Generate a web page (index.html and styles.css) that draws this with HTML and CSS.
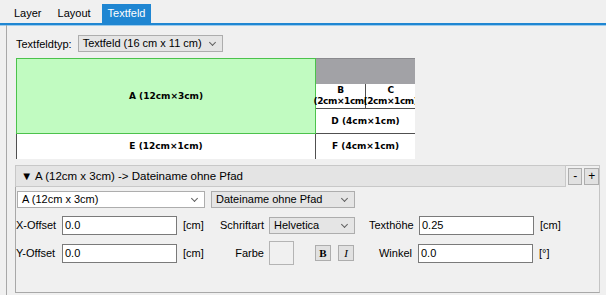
FILE: index.html
```html
<!DOCTYPE html>
<html lang="de">
<head>
    <meta charset="UTF-8">
    <title>Textfeld</title>
    <link rel="stylesheet" href="styles.css">
</head>
<body>
    <div class="tabs">
        <div class="tab">Layer</div>
        <div class="tab">Layout</div>
        <div class="tab active">Textfeld</div>
    </div>

    <div class="panel">
        <div class="type-row">
            <span class="label">Textfeldtyp:</span>
            <div class="combo type-combo">Textfeld (16 cm x 11 cm)<span class="arrow"></span></div>
        </div>

        <div class="diagram">
            <div class="cell cell-a">A (12cm×3cm)</div>
            <div class="cell cell-gray"></div>
            <div class="cell cell-b">B<br>(2cm×1cm)</div>
            <div class="cell cell-c">C<br>(2cm×1cm)</div>
            <div class="cell cell-d">D (4cm×1cm)</div>
            <div class="cell cell-e">E (12cm×1cm)</div>
            <div class="cell cell-f">F (4cm×1cm)</div>
        </div>

        <div class="group">
            <div class="group-head">
                <div class="section-title">▼ A (12cm x 3cm) -&gt; Dateiname ohne Pfad</div>
                <div class="small-btn">-</div>
                <div class="small-btn">+</div>
            </div>

            <div class="row row-combos">
                <div class="combo field-combo">A (12cm x 3cm)<span class="arrow"></span></div>
                <div class="combo name-combo">Dateiname ohne Pfad<span class="arrow"></span></div>
            </div>

            <div class="row">
                <span class="label offset-label">X-Offset</span>
                <div class="input">0.0</div>
                <span class="unit">[cm]</span>
                <span class="label mid-label">Schriftart</span>
                <div class="combo font-combo">Helvetica<span class="arrow"></span></div>
                <span class="label right-label">Texthöhe</span>
                <div class="input">0.25</div>
                <span class="unit">[cm]</span>
            </div>

            <div class="row">
                <span class="label offset-label">Y-Offset</span>
                <div class="input">0.0</div>
                <span class="unit">[cm]</span>
                <span class="label mid-label">Farbe</span>
                <div class="swatch"></div>
                <div class="style-btn bold">B</div>
                <div class="style-btn italic">I</div>
                <span class="label right-label">Winkel</span>
                <div class="input">0.0</div>
                <span class="unit">[°]</span>
            </div>
        </div>
    </div>
</body>
</html>
```

FILE: styles.css
```css
* {
    margin: 0;
    padding: 0;
    box-sizing: border-box;
}

body {
    font-family: 'Liberation Sans', Arial, sans-serif;
    font-size: 11px;
    color: #000000;
    background-color: #f0f0f0;
    width: 606px;
    height: 295px;
    overflow: hidden;
}

/* Reiter */
.tabs {
    display: flex;
    height: 25px;
    padding: 4px 0 0 8px;
    border-bottom: 2px solid #1f86d2;
    box-shadow: 0 1px 0 #9ccbec;
}

.tab {
    padding: 3px 6px 0 6px;
    margin-right: 4px;
    height: 19px;
}

.tab.active {
    background-color: #1f86d2;
    color: #ffffff;
    margin-left: 1px;
}

.panel {
    margin-left: 6px;
    border-left: 1px solid #a8a8a8;
    padding: 10px 0 0 9px;
    height: 270px;
}

.type-row {
    display: flex;
    align-items: center;
    gap: 6px;
}

.combo {
    position: relative;
    height: 17px;
    line-height: 15px;
    padding-left: 4px;
    background-color: #e5e5e5;
    border: 1px solid #adadad;
}

.arrow {
    position: absolute;
    right: 7px;
    top: 4px;
    width: 5px;
    height: 5px;
    border-right: 1px solid #606060;
    border-bottom: 1px solid #606060;
    transform: rotate(45deg);
}

.type-combo {
    width: 145px;
}

/* Skizze */
.diagram {
    display: grid;
    grid-template-columns: 300px 50px 49px;
    grid-template-rows: 26px 25px 25px 25px;
    width: 399px;
    margin-top: 6px;
    overflow: hidden;
    font-family: 'DejaVu Sans', Tahoma, sans-serif;
    font-size: 9px;
    font-weight: bold;
}

.cell {
    display: flex;
    align-items: center;
    justify-content: center;
    text-align: center;
    background-color: #ffffff;
    white-space: nowrap;
    line-height: 11px;
}

.cell-a {
    grid-row: 1 / 4;
    grid-column: 1;
    background-color: #c1fbc1;
    border: 1px solid #4cc24c;
}

.cell-gray {
    grid-row: 1;
    grid-column: 2 / 4;
    background-color: #a2a2a6;
    border-top: 1px solid #8a8a8e;
}

.cell-b {
    grid-row: 2;
    grid-column: 2;
    border-right: 1px solid #505050;
    border-bottom: 1px solid #505050;
    letter-spacing: -0.4px;
}

.cell-c {
    grid-row: 2;
    grid-column: 3;
    border-bottom: 1px solid #505050;
    letter-spacing: -0.4px;
}

.cell-d {
    grid-row: 3;
    grid-column: 2 / 4;
    border-bottom: 1px solid #505050;
}

.cell-e {
    grid-row: 4;
    grid-column: 1;
    border-left: 1px solid #505050;
    border-right: 1px solid #505050;
}

.cell-f {
    grid-row: 4;
    grid-column: 2 / 4;
}

/* Gruppe */
.group {
    width: 585px;
    margin-top: 6px;
    margin-left: -1px;
    height: 128px;
    border: 1px solid #c4c4c4;
    border-left-color: #a8a8a8;
    border-bottom-color: #a8a8a8;
}

.group-head {
    display: flex;
    align-items: center;
    gap: 2px;
    height: 22px;
    margin-top: -1px;
}

.section-title {
    width: 570px;
    height: 22px;
    line-height: 20px;
    padding-left: 5px;
    background-color: #e4e4e4;
    border: 1px solid #c8c8c8;
    margin-left: -1px;
    font-size: 11.5px;
}

.small-btn {
    width: 15px;
    height: 17px;
    line-height: 15px;
    text-align: center;
    background-color: #e1e1e1;
    border: 1px solid #adadad;
    font-size: 12px;
}

.row {
    display: flex;
    align-items: center;
    height: 28px;
}

.row-combos {
    height: 24px;
    gap: 6px;
    padding-left: 1px;
}

.field-combo {
    width: 188px;
    background-color: #ffffff;
}

.name-combo {
    width: 144px;
}

.offset-label {
    width: 46px;
}

.input {
    width: 115px;
    height: 19px;
    line-height: 17px;
    padding-left: 2px;
    background-color: #ffffff;
    border: 1px solid #7a7a7a;
}

.unit {
    width: 40px;
    padding-left: 6px;
}

.mid-label {
    width: 52px;
    text-align: right;
    padding-right: 5px;
}

.font-combo {
    width: 86px;
    margin-right: 14px;
}

.right-label {
    width: 50px;
    text-align: right;
    padding-right: 6px;
}

.swatch {
    width: 25px;
    height: 24px;
    background-color: #f0f0f0;
    border: 1px solid #b4b4b4;
    margin-right: 21px;
}

.style-btn {
    width: 16px;
    height: 16px;
    line-height: 14px;
    text-align: center;
    background-color: #e1e1e1;
    border: 1px solid #adadad;
    font-family: 'Liberation Serif', serif;
    font-size: 11px;
    margin-right: 7px;
}

.bold {
    font-weight: bold;
}

.italic {
    font-style: italic;
    margin-right: 14px;
}
```
